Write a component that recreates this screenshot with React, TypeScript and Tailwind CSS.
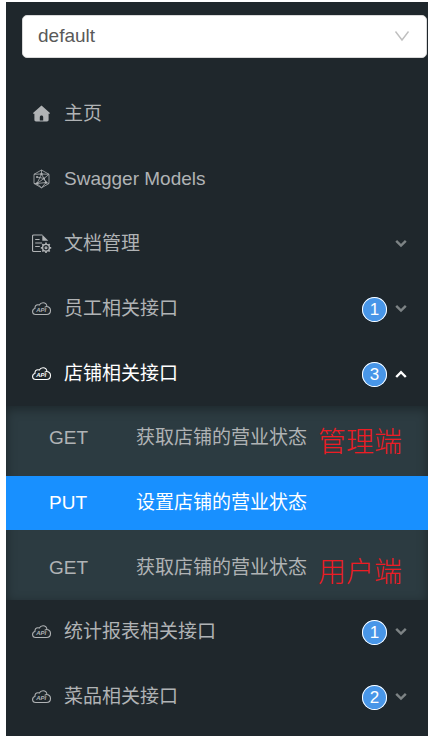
import { useState, type ReactNode } from "react";

function HomeIcon() {
  return (
    <svg viewBox="0 0 20 20" className="size-5 shrink-0" fill="currentColor" aria-hidden="true">
      <path
        fillRule="evenodd"
        d="M9.500 1.500 1.300 8.700c-.5.500-.2 1.100.4 1.100h.7v6c0 1 .6 1.600 1.600 1.600h11c1 0 1.600-.6 1.600-1.600v-6h.7c.6 0 .9-.6.400-1.100zM7.800 16.400v-3.200c0-1 .7-1.700 1.700-1.700s1.700.7 1.700 1.700v3.200z"
      />
    </svg>
  );
}

function ModelsIcon() {
  return (
    <svg viewBox="0 0 20 20" className="size-5 shrink-0" fill="none" stroke="currentColor" strokeWidth="0.8" aria-hidden="true">
      <path d="M9.500 1 17 5.300v9.200L9.500 18.800 2 14.500V5.300z" />
      <path d="M9.500 1v4L2 5.300M9.500 5 17 5.300M9.500 5 5 14.500 2 14.500M5 14.500l9-1 3 1M14 13.500 9.500 5M5 8l7 1.500L14 13.500M12 9.500l5-4.200M12 9.500l-7 5M5 14.500l4.500 4.300 4.500-5.300" />
      <g fill="currentColor" stroke="none">
        <circle cx="9.500" cy="5" r="1.200" />
        <circle cx="5" cy="14.500" r="1.200" />
        <circle cx="14" cy="13.500" r="1.200" />
        <circle cx="5" cy="8" r="1" />
        <circle cx="12" cy="9.500" r="1" />
      </g>
    </svg>
  );
}

function DocumentIcon() {
  return (
    <svg viewBox="0 0 20 20" className="size-5 shrink-0" fill="none" stroke="currentColor" strokeWidth="1.200" aria-hidden="true">
      <path d="M9 17.500H1.700c-.8 0-1.200-.4-1.200-1.200V2.200c0-.8.4-1.200 1.200-1.200h8.600" />
      <path d="M10.300.8v6h6z" fill="currentColor" stroke="none" />
      <path d="M3.200 5.500h4.400M3.200 9h6.800M3.200 12.500h4.600" />
      <circle cx="14" cy="13.800" r="3.400" strokeWidth="1.400" />
      <circle cx="14" cy="13.800" r="0.900" />
      <path strokeWidth="1.700" d="M14 8.600v1.700M14 17.300V19M8.800 13.800h1.700M17.500 13.800h1.700M10.300 10.100l1.200 1.200M16.500 16.300l1.200 1.200M10.300 17.500l1.200-1.200M16.500 11.300l1.200-1.200" />
    </svg>
  );
}

function CloudApiIcon() {
  return (
    <svg viewBox="0 0 20 20" className="size-5 shrink-0" fill="none" stroke="currentColor" strokeWidth="1.100" aria-hidden="true">
      <path d="M3.800 15.500C1.700 15.500.6 14.200.6 12.500c0-1.600 1-2.700 2.300-3C2.900 7 4.200 5.800 6 5.800c.5 0 .9.100 1.300.3C8.100 4.500 9.400 3.700 11 3.700c2.200 0 3.700 1.500 4 3.800 2.200.4 3.500 1.900 3.500 4 0 2.400-1.600 4-4 4z" />
      <path d="M15 7.500c-1 0-1.700.2-2.400.8" />
      <text x="9.300" y="13" textAnchor="middle" fill="currentColor" stroke="none" className="font-['Liberation_Sans',sans-serif] text-[6px] font-bold italic">
        API
      </text>
    </svg>
  );
}

function Arrow({ up = false }: { up?: boolean }) {
  return (
    <svg viewBox="0 0 12 12" className={up ? "size-3 text-white" : "size-3 text-[#7d8385]"} fill="none" stroke="currentColor" strokeWidth="2.400" aria-hidden="true">
      <path d={up ? "M1.200 9 6 4.200 10.800 9" : "M1.200 2.800 6 7.600 10.800 2.800"} />
    </svg>
  );
}

type EntryProps = {
  icon: ReactNode;
  label: string;
  count?: number;
  expandable?: boolean;
  open?: boolean;
  onToggle?: () => void;
};

function Entry({ icon, label, count, expandable, open, onToggle }: EntryProps) {
  return (
    <button
      type="button"
      onClick={onToggle}
      aria-expanded={expandable ? Boolean(open) : undefined}
      className={
        open
          ? "flex h-[54px] w-full items-center pr-[21px] pl-[26px] text-left text-white"
          : "flex h-[54px] w-full items-center pr-[21px] pl-[26px] text-left text-[#b0b3b5]"
      }
    >
      {icon}
      <span className="ml-3 flex-1 whitespace-nowrap">{label}</span>
      {count !== undefined && (
        <span className="mr-2 flex size-[25px] items-center justify-center rounded-full bg-[#4896e8] text-[17px] leading-none text-white ring-1 ring-white ring-inset">
          {count}
        </span>
      )}
      {expandable && <Arrow up={open} />}
    </button>
  );
}

const endpoints = [
  { method: "GET", name: "获取店铺的营业状态", note: "管理端" },
  { method: "PUT", name: "设置店铺的营业状态", note: "" },
  { method: "GET", name: "获取店铺的营业状态", note: "用户端" },
];

export default function App() {
  const [open, setOpen] = useState(true);
  const [selected, setSelected] = useState(1);

  return (
    <div className="min-h-screen bg-white pt-0.5 pr-2 pl-1.5">
      <aside className="bg-[#1f272c] pt-[13px] pb-3 font-['Liberation_Sans','Noto_Sans_CJK_SC',sans-serif] text-[19px] leading-7">
        <div className="relative mr-px ml-4">
          <select
            aria-label="Group"
            defaultValue="default"
            className="h-[43px] w-full appearance-none rounded-[5px] border border-[#d9d9d9] bg-white px-[15px] pb-0.5 text-[#595959]"
          >
            <option value="default">default</option>
          </select>
          <svg viewBox="0 0 16 16" className="pointer-events-none absolute top-[13px] right-[17px] size-4 text-[#bfbfbf]" fill="none" stroke="currentColor" strokeWidth="1.400" aria-hidden="true">
            <path d="M1.500 3.500 8 12l6.500-8.500" />
          </svg>
        </div>

        <nav className="mt-[29px] flex flex-col gap-[11px]">
          <Entry icon={<HomeIcon />} label="主页" />
          <Entry icon={<ModelsIcon />} label="Swagger Models" />
          <Entry icon={<DocumentIcon />} label="文档管理" expandable />
          <Entry icon={<CloudApiIcon />} label="员工相关接口" count={1} expandable />
          <div>
            <Entry icon={<CloudApiIcon />} label="店铺相关接口" count={3} expandable open={open} onToggle={() => setOpen(!open)} />
            {open && (
              <ul className="mt-[5px] -mb-1.5 flex flex-col gap-[11px] bg-[#2c3b41] py-[5px] shadow-[inset_0_3px_11px_rgba(0,0,0,0.35)]">
                {endpoints.map((item, i) => (
                  <li key={i}>
                    <button
                      type="button"
                      onClick={() => setSelected(i)}
                      className={
                        i === selected
                          ? "flex h-[54px] w-full items-center bg-[#1890ff] pl-[43px] text-left whitespace-nowrap text-white"
                          : "flex h-[54px] w-full items-center pl-[43px] text-left whitespace-nowrap text-[#b0b3b5]"
                      }
                    >
                      <span className="w-[87px]">{item.method}</span>
                      <span>{item.name}</span>
                      {item.note && (
                        <span className="ml-[11px] pt-1 font-['Noto_Sans_CJK_SC',sans-serif] text-[28px] font-light text-[#ed1c24]">
                          {item.note}
                        </span>
                      )}
                    </button>
                  </li>
                ))}
              </ul>
            )}
          </div>
          <Entry icon={<CloudApiIcon />} label="统计报表相关接口" count={1} expandable />
          <Entry icon={<CloudApiIcon />} label="菜品相关接口" count={2} expandable />
        </nav>
      </aside>
    </div>
  );
}
